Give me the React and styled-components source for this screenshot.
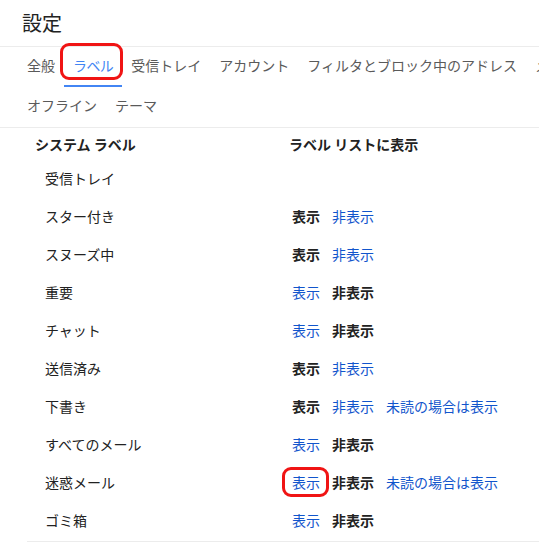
import React from 'react';
import styled, { createGlobalStyle } from 'styled-components';

const GlobalStyle = createGlobalStyle`
  html, body {
    margin: 0;
    padding: 0;
    background: #fff;
    overflow: hidden;
  }
  body {
    font-family: 'Noto Sans CJK JP', 'Noto Sans', sans-serif;
    font-size: 14px;
    color: #222;
  }
`;

const Page = styled.div`
  width: 539px;
  height: 542px;
  overflow: hidden;
`;

const Header = styled.h1`
  margin: 0;
  height: 46px;
  line-height: 46px;
  padding-left: 22px;
  font-size: 20px;
  font-weight: 400;
  color: #222;
  border-bottom: 1px solid #ececec;
`;

const TabBar = styled.nav`
  padding-left: 18px;
  border-bottom: 1px solid #ececec;
`;

const TabRow = styled.div`
  display: flex;
  white-space: nowrap;
`;

const Tab = styled.span`
  position: relative;
  padding: 0 9px 1px;
  line-height: 37px;
  border-bottom: 2px solid ${p => (p.$active ? '#4285f4' : 'transparent')};
  color: ${p => (p.$active ? '#4285f4' : '#5a5a5a')};
  letter-spacing: ${p => (p.$active ? '-0.6px' : '0')};
  cursor: pointer;
`;

const Mark = styled.span`
  position: absolute;
  top: ${p => p.$top}px;
  right: ${p => p.$right}px;
  bottom: ${p => p.$bottom}px;
  left: ${p => p.$left}px;
  border: 3px solid #f01414;
  border-radius: 9px;
  pointer-events: none;
`;

const LabelTable = styled.div`
  margin-left: 27px;
  border-bottom: 1px solid #ececec;
`;

const HeadRow = styled.div`
  display: grid;
  grid-template-columns: 254px 1fr;
  height: 33px;
  padding-top: 4px;
  box-sizing: border-box;
  line-height: 24px;
  font-weight: 700;
  color: #222;
`;

const HeadCell = styled.div`
  padding-left: 8px;
`;

const Row = styled.div`
  display: grid;
  grid-template-columns: 254px 1fr;
  align-items: center;
  height: 38px;
  padding-bottom: 5px;
  box-sizing: border-box;
`;

const LabelName = styled.div`
  padding-left: 18px;
  line-height: 20px;
  color: #222;
`;

const Options = styled.div`
  display: flex;
  gap: 12px;
  padding-left: 11px;
  white-space: nowrap;
`;

const Option = styled.span`
  position: relative;
  line-height: 20px;
  color: ${p => (p.$current ? '#222' : '#1155cc')};
  font-weight: ${p => (p.$current ? 700 : 400)};
  cursor: ${p => (p.$current ? 'default' : 'pointer')};
`;

const tabsTop = ['全般', 'ラベル', '受信トレイ', 'アカウント', 'フィルタとブロック中のアドレス', 'メール転送と POP/IMAP', 'アドオン'];
const tabsBottom = ['オフライン', 'テーマ'];

// current: 'show' | 'hide' | null ; unread: has the 未読の場合は表示 link
const labels = [
  { name: '受信トレイ', current: null },
  { name: 'スター付き', current: 'show' },
  { name: 'スヌーズ中', current: 'show' },
  { name: '重要', current: 'hide' },
  { name: 'チャット', current: 'hide' },
  { name: '送信済み', current: 'show' },
  { name: '下書き', current: 'show', unread: true },
  { name: 'すべてのメール', current: 'hide' },
  { name: '迷惑メール', current: 'hide', unread: true, marked: true },
  { name: 'ゴミ箱', current: 'hide' },
];

const App = () => (
  <Page>
    <GlobalStyle />
    <Header>設定</Header>
    <TabBar>
      <TabRow>
        {tabsTop.map(t => (
          <Tab key={t} $active={t === 'ラベル'}>
            {t}
            {t === 'ラベル' && <Mark $top={-4} $right={-1} $bottom={5} $left={-4} />}
          </Tab>
        ))}
      </TabRow>
      <TabRow>
        {tabsBottom.map(t => (
          <Tab key={t}>{t}</Tab>
        ))}
      </TabRow>
    </TabBar>
    <LabelTable>
      <HeadRow>
        <HeadCell>システム ラベル</HeadCell>
        <HeadCell>ラベル リストに表示</HeadCell>
      </HeadRow>
      {labels.map(l => (
        <Row key={l.name}>
          <LabelName>{l.name}</LabelName>
          {l.current && (
            <Options>
              <Option $current={l.current === 'show'}>
                表示
                {l.marked && <Mark $top={-5} $right={-9} $bottom={-5} $left={-10} />}
              </Option>
              <Option $current={l.current === 'hide'}>非表示</Option>
              {l.unread && <Option>未読の場合は表示</Option>}
            </Options>
          )}
        </Row>
      ))}
    </LabelTable>
  </Page>
);

export default App;
